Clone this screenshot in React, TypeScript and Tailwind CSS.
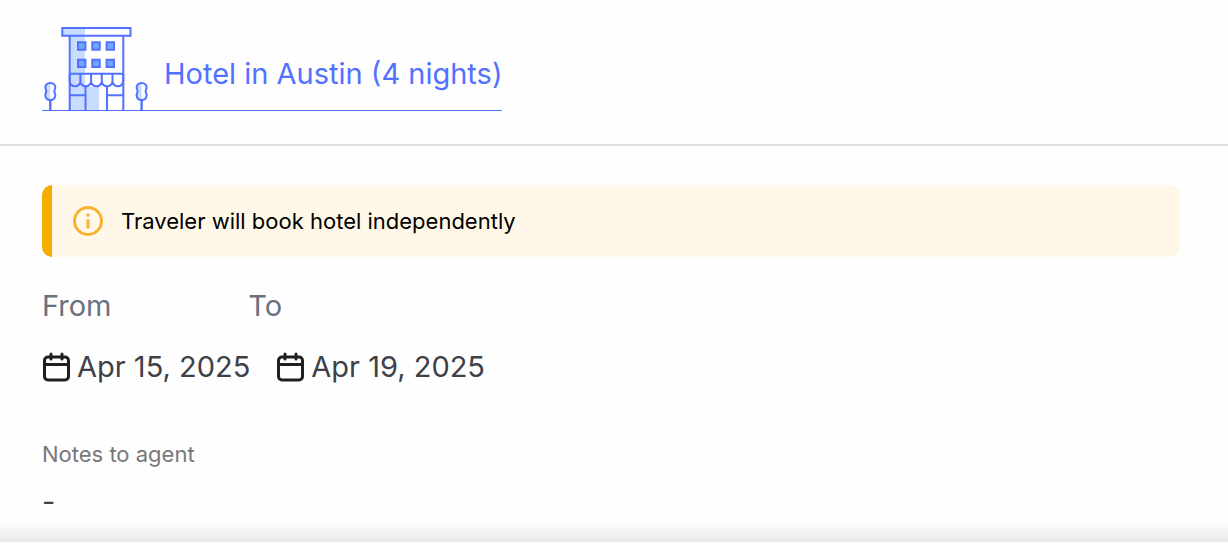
import React from "react";

const TREE =
  "M8 1C5 1 3 3 3 5.500c0 1.500 1 2.500 1 3.800s-1 2.200-1 4C3 16 5 18 8 18s5-2 5-4.700c0-1.800-1-2.700-1-4s1-2.300 1-3.800C13 3 11 1 8 1z";

function Tree({ x }: { x: number }) {
  return (
    <g transform={`translate(${x} 82)`}>
      <path d="M8 1C5 1 3 3 3 5.500c0 1.500 1 2.500 1 3.800s-1 2.200-1 4C3 16 5 18 8 18z" fill="#c7dcff" stroke="none" />
      <path d={TREE} />
      <path d="M8 18v10" strokeWidth="2.400" />
    </g>
  );
}

function HotelIcon() {
  return (
    <svg width="108" height="86" viewBox="42 24 108 86" fill="none" stroke="#5271ff" strokeWidth="2" aria-hidden="true" className="block shrink-0">
      <path d="M62 28h23v8H62zM70 36h15v74H70zM85 87h14v23H85z" fill="#c7dcff" stroke="none" />
      <path d="M62.300 28h68.200v7.800H62.300zM69.700 36v74M123.300 36v74M69.700 73.700h53.600" />
      <path d="M69.700 74v7a5.300 5.300 0 0 0 10.700 0v-7v7a5.300 5.300 0 0 0 10.700 0v-7v7a5.300 5.300 0 0 0 10.700 0v-7v7a5.300 5.300 0 0 0 10.700 0v-7v7a5.300 5.300 0 0 0 10.700 0v-7" />
      <path d="M85.500 86v24M107 86v24M70 95.200h15.500M107 95.200h16" />
      <path
        d="M78 42.300h7.400v7.400H78zM92.300 42.300h7.400v7.400h-7.400zM106.600 42.300h7.400v7.400h-7.400zM78 59.700h7.400v7.400H78zM92.300 59.700h7.400v7.400h-7.400zM106.600 59.700h7.400v7.400h-7.400z"
        fill="#70a6ff"
      />
      <Tree x={42.3} />
      <Tree x={133.6} />
    </svg>
  );
}

function CalendarIcon() {
  return (
    <svg width="28" height="30" viewBox="0 0 28 30" fill="none" stroke="#1f1f1f" strokeWidth="3" strokeLinecap="round" aria-hidden="true" className="shrink-0">
      <rect x="2.500" y="5" width="24" height="23" rx="3.500" />
      <path d="M2.500 12.500h24M9 2v5M20 2v5" />
    </svg>
  );
}

function DateField({ label, value, className }: { label: string; value: string; className: string }) {
  return (
    <div className="flex flex-col gap-[25px]">
      <dt className={`text-[29px] leading-9 text-[#6b7080] ${className}`}>{label}</dt>
      <dd className="flex items-center gap-[7px] text-[29px] leading-9 text-[#3f4048]">
        <CalendarIcon />
        {value}
      </dd>
    </div>
  );
}

export default function App() {
  return (
    <main className="bg-[#fefefe] font-['Inter',sans-serif]">
      <header className="flex border-b-2 border-[#dedede] px-[42px] pt-6 pb-[33px]">
        <a href="#hotel" className="flex items-center gap-[14px] border-b border-[#5271ff] text-[#5271ff]">
          <HotelIcon />
          <h1 className="pt-[14px] text-[29px] leading-9">Hotel in Austin (4 nights)</h1>
        </a>
      </header>
      <section className="px-[42px] pt-[39px]">
        <div role="status" className="mr-[6px] flex h-[72px] items-center gap-[18px] rounded-[10px] border-l-[10px] border-[#f5ae00] bg-[#fff8e8] pl-[21px]">
          <svg width="30" height="30" viewBox="0 0 30 30" fill="none" stroke="#f8b133" strokeWidth="3" aria-hidden="true">
            <circle cx="15" cy="15" r="13.500" />
            <path d="M15 13.500v9M15 7.500v3" />
          </svg>
          <p className="text-[22px] leading-7 text-black">Traveler will book hotel independently</p>
        </div>
        <dl className="flex gap-[26px] pt-[31px]">
          <DateField label="From" value="Apr 15, 2025" className="" />
          <DateField label="To" value="Apr 19, 2025" className="-ml-7" />
        </dl>
        <h2 className="pt-[55px] text-[22px] leading-7 text-[#77777c]">Notes to agent</h2>
        <p className="pt-4 text-[29px] leading-9 text-[#3f4048]">-</p>
      </section>
      <div className="mt-[2px] h-5 bg-linear-to-b from-[#fefefe] to-[#e9e9e9]" />
    </main>
  );
}
